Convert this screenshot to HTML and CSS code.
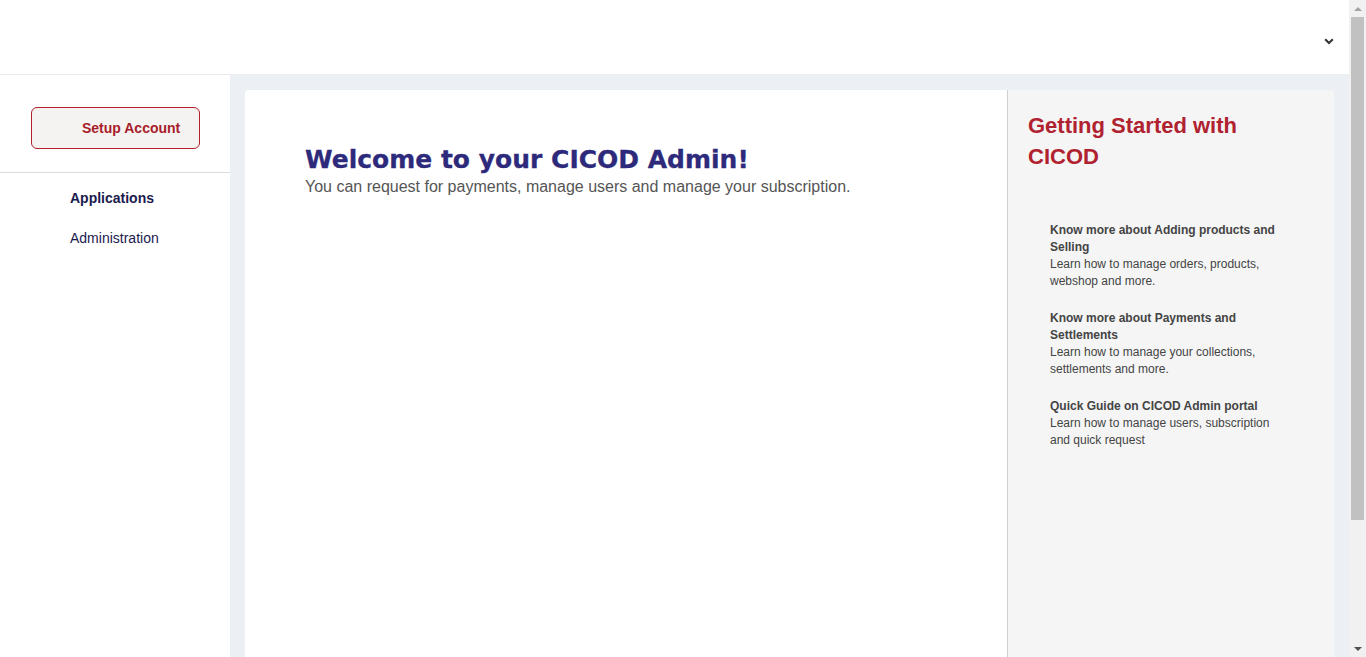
FILE: index.html
```html
<!DOCTYPE html>
<html lang="en">
<head>
<meta charset="utf-8">
<title>CICOD Admin</title>
<link rel="stylesheet" href="styles.css">
</head>
<body>
<div class="page">
  <header class="topbar">
    <button class="user-toggle" aria-label="Account menu">
      <svg width="10" height="7" viewBox="0 0 10 7"><path d="M1.2 1.2 L5 5 L8.8 1.2" fill="none" stroke="#333" stroke-width="2"/></svg>
    </button>
  </header>
  <div class="layout">
    <aside class="sidebar">
      <div class="setup-wrap">
        <button class="setup-btn">Setup Account</button>
      </div>
      <nav class="nav">
        <a class="nav-item active">Applications</a>
        <a class="nav-item">Administration</a>
      </nav>
    </aside>
    <main class="main">
      <section class="card">
        <div class="welcome">
          <h1 class="welcome-title">Welcome to your CICOD Admin!</h1>
          <p class="welcome-sub">You can request for payments, manage users and manage your subscription.</p>
        </div>
        <div class="guide">
          <h2 class="guide-title">Getting Started with CICOD</h2>
          <ul class="guide-list">
            <li class="guide-item">
              <div class="guide-item-title">Know more about Adding products and Selling</div>
              <div class="guide-item-desc">Learn how to manage orders, products, webshop and more.</div>
            </li>
            <li class="guide-item">
              <div class="guide-item-title">Know more about Payments and Settlements</div>
              <div class="guide-item-desc">Learn how to manage your collections, settlements and more.</div>
            </li>
            <li class="guide-item">
              <div class="guide-item-title">Quick Guide on CICOD Admin portal</div>
              <div class="guide-item-desc">Learn how to manage users, subscription and quick request</div>
            </li>
          </ul>
        </div>
      </section>
    </main>
  </div>
</div>
<div class="scrollbar" aria-hidden="true">
  <span class="sb-arrow sb-up"></span>
  <span class="sb-track"><span class="sb-thumb"></span></span>
  <span class="sb-arrow sb-down"></span>
</div>
</body>
</html>
```
FILE: styles.css
```css
* { box-sizing: border-box; }
html, body { margin: 0; padding: 0; }
body {
  font-family: "Liberation Sans", Arial, sans-serif;
  background: #ffffff;
  color: #444;
}
.page {
  margin-right: 17px;
}
.topbar {
  height: 74px;
  background: #fff;
  display: flex;
  justify-content: flex-end;
  align-items: center;
  padding-right: 14px;
}
.user-toggle {
  border: 0;
  background: transparent;
  padding: 0;
  width: 12px;
  height: 12px;
  display: flex;
  align-items: center;
  justify-content: center;
  margin-top: 9px;
  cursor: pointer;
}
.layout {
  display: flex;
  background: #eceff4;
}
.sidebar {
  width: 230px;
  flex-shrink: 0;
  background: #fff;
  border-top: 1px solid #e9e9e9;
}
.setup-wrap {
  padding: 32px 30px 23px 31px;
  border-bottom: 1px solid #dcdcdc;
}
.setup-btn {
  display: block;
  width: 169px;
  height: 42px;
  border: 1px solid #b5202e;
  border-radius: 6px;
  background: #f5f3f1;
  color: #a81d2a;
  font-family: "Liberation Sans", Arial, sans-serif;
  font-weight: bold;
  font-size: 14px;
  text-align: left;
  padding: 0 0 0 50px;
}
.nav {
  display: flex;
  flex-direction: column;
  padding: 16px 0 0 70px;
  gap: 22px;
}
.nav-item {
  font-size: 14px;
  line-height: 18px;
  color: #1b1a4f;
  cursor: pointer;
}
.nav-item.active { font-weight: bold; }
.main {
  flex: 1;
  padding: 16px 15px 0 15px;
}
.card {
  display: flex;
  background: #fff;
  border-radius: 4px 4px 0 0;
  height: 724px;
  overflow: hidden;
}
.welcome {
  width: 763px;
  flex-shrink: 0;
  padding: 56px 0 0 60px;
  border-right: 1px solid #cfcfcf;
}
.welcome-title {
  margin: 0;
  font-family: "DejaVu Sans", "Liberation Sans", sans-serif;
  font-size: 25px;
  line-height: 28px;
  font-weight: bold;
  color: #2e2a7b;
  -webkit-text-stroke: 0.3px #2e2a7b;
}
.welcome-sub {
  margin: 3px 0 0 0;
  font-size: 16px;
  line-height: 20px;
  color: #555;
}
.guide {
  flex: 1;
  background: #f5f5f5;
  padding: 20px 20px 0 20px;
}
.guide-title {
  margin: 0;
  font-size: 22px;
  line-height: 31px;
  font-weight: bold;
  color: #b0222f;
  width: 250px;
}
.guide-list {
  list-style: none;
  margin: 50px 0 0 0;
  padding: 0 0 0 22px;
  width: 258px;
  display: flex;
  flex-direction: column;
  gap: 20px;
}
.guide-item {
  font-size: 12px;
  line-height: 17px;
  color: #444;
}
.guide-item-title { font-weight: bold; }

/* browser scrollbar */
.scrollbar {
  position: fixed;
  top: 0;
  right: 0;
  bottom: 0;
  width: 17px;
  background: #f1f1f1;
  display: flex;
  flex-direction: column;
}
.sb-arrow {
  height: 17px;
  flex-shrink: 0;
  display: flex;
  align-items: center;
  justify-content: center;
}
.sb-up::before {
  content: "";
  border-left: 4px solid transparent;
  border-right: 4px solid transparent;
  border-bottom: 4px solid #a3a3a3;
}
.sb-down::before {
  content: "";
  border-left: 4px solid transparent;
  border-right: 4px solid transparent;
  border-top: 4px solid #505050;
}
.sb-track {
  flex: 1;
  padding: 0 2px;
}
.sb-thumb {
  display: block;
  height: 503px;
  background: #c1c1c1;
}
```
